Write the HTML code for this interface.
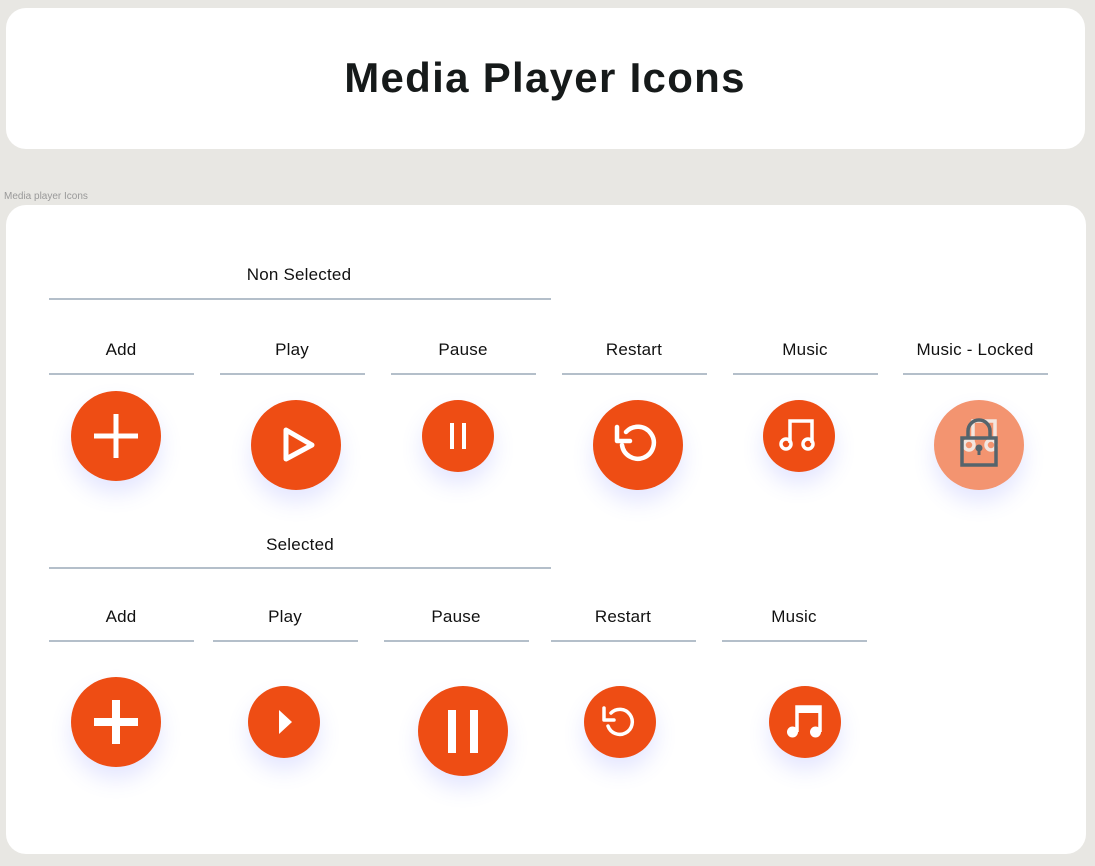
<!DOCTYPE html>
<html><head><style>
body{margin:0;width:1095px;height:866px;background:#e8e7e3;font-family:"Liberation Sans",sans-serif;position:relative;overflow:hidden}
.card{position:absolute;background:#fff;border-radius:20px}
.t{position:absolute;font-size:17px;color:#111;text-align:center;transform:translateX(-50%);white-space:nowrap;letter-spacing:0.2px}
.ln{position:absolute;height:2px;background:#b4bfca}
.c{position:absolute;border-radius:50%;background:#ee4d14;box-shadow:0 12px 22px rgba(90,100,255,0.16)}
.c svg{position:absolute;left:0;top:0;width:100%;height:100%}
</style></head><body>
<div class="card" style="left:6px;top:8px;width:1079px;height:141px"></div>
<div style="position:absolute;left:0;width:1090px;top:54px;text-align:center;font-size:42px;letter-spacing:1.3px;font-weight:bold;color:#161a1a">Media Player Icons</div>
<div style="position:absolute;left:4px;top:191px;font-size:10px;color:#999">Media player Icons</div>
<div class="card" style="left:6px;top:205px;width:1080px;height:649px"></div>

<div class="t" style="left:299px;top:265px">Non Selected</div>
<div class="ln" style="left:49px;top:298px;width:502px"></div>
<div class="t" style="left:121px;top:340px">Add</div><div class="ln" style="left:49px;top:373px;width:145px"></div>
<div class="t" style="left:292px;top:340px">Play</div><div class="ln" style="left:220px;top:373px;width:145px"></div>
<div class="t" style="left:463px;top:340px">Pause</div><div class="ln" style="left:391px;top:373px;width:145px"></div>
<div class="t" style="left:634px;top:340px">Restart</div><div class="ln" style="left:562px;top:373px;width:145px"></div>
<div class="t" style="left:805px;top:340px">Music</div><div class="ln" style="left:733px;top:373px;width:145px"></div>
<div class="t" style="left:975px;top:340px">Music - Locked</div><div class="ln" style="left:903px;top:373px;width:145px"></div>

<div class="c" style="left:71px;top:391px;width:90px;height:90px"><svg viewBox="0 0 90 90"><path d="M45 23V67M23 45H67" stroke="#fff" stroke-width="5"/></svg></div>
<div class="c" style="left:251px;top:400px;width:90px;height:90px"><svg viewBox="0 0 90 90"><path d="M35 30V59L61 45Z" fill="none" stroke="#fff" stroke-width="5" stroke-linejoin="round"/></svg></div>
<div class="c" style="left:422px;top:400px;width:72px;height:72px"><svg viewBox="0 0 72 72"><path d="M30 23V49M42 23V49" stroke="#fff" stroke-width="4"/></svg></div>
<div class="c" style="left:593px;top:400px;width:90px;height:90px"><svg viewBox="0 0 90 90"><path d="M29 45A16 16 0 1 0 33 32" fill="none" stroke="#fff" stroke-width="4.5" stroke-linecap="round"/><path d="M24 27V41H37" fill="none" stroke="#fff" stroke-width="4.5" stroke-linecap="round" stroke-linejoin="round"/></svg></div>
<div class="c" style="left:763px;top:400px;width:72px;height:72px"><svg viewBox="0 0 72 72"><path d="M27 43V21H49V43" fill="none" stroke="#fff" stroke-width="3.5"/><circle cx="23" cy="44" r="5" fill="none" stroke="#fff" stroke-width="3.5"/><circle cx="45" cy="44" r="5" fill="none" stroke="#fff" stroke-width="3.5"/></svg></div>
<div class="c" style="left:934px;top:400px;width:90px;height:90px;background:#f39470"><svg viewBox="0 0 90 90"><path d="M39 43V21H61V43" fill="none" stroke="#f2e6e0" stroke-width="3.5"/><circle cx="35" cy="45" r="5" fill="none" stroke="#f2e6e0" stroke-width="3.5"/><circle cx="57" cy="45" r="5" fill="none" stroke="#f2e6e0" stroke-width="3.5"/><path d="M34 38V31A11 11 0 0 1 56 31V38" fill="none" stroke="#55646c" stroke-width="3.5"/><rect x="28" y="38" width="34" height="27" fill="none" stroke="#55646c" stroke-width="3.5"/><circle cx="45" cy="48" r="3.5" fill="#55646c"/><path d="M45 48V55" stroke="#55646c" stroke-width="3"/></svg></div>

<div class="t" style="left:300px;top:535px">Selected</div>
<div class="ln" style="left:49px;top:567px;width:502px"></div>
<div class="t" style="left:121px;top:607px">Add</div><div class="ln" style="left:49px;top:640px;width:145px"></div>
<div class="t" style="left:285px;top:607px">Play</div><div class="ln" style="left:213px;top:640px;width:145px"></div>
<div class="t" style="left:456px;top:607px">Pause</div><div class="ln" style="left:384px;top:640px;width:145px"></div>
<div class="t" style="left:623px;top:607px">Restart</div><div class="ln" style="left:551px;top:640px;width:145px"></div>
<div class="t" style="left:794px;top:607px">Music</div><div class="ln" style="left:722px;top:640px;width:145px"></div>

<div class="c" style="left:71px;top:677px;width:90px;height:90px"><svg viewBox="0 0 90 90"><path d="M45 23V67M23 45H67" stroke="#fff" stroke-width="8"/></svg></div>
<div class="c" style="left:248px;top:686px;width:72px;height:72px"><svg viewBox="0 0 72 72"><path d="M31 24V48L44 36Z" fill="#fff"/></svg></div>
<div class="c" style="left:418px;top:686px;width:90px;height:90px"><svg viewBox="0 0 90 90"><path d="M34 24V67M56 24V67" stroke="#fff" stroke-width="8"/></svg></div>
<div class="c" style="left:584px;top:686px;width:72px;height:72px"><svg viewBox="0 0 72 72"><path d="M24 40A12.5 12.5 0 1 0 27 27" fill="none" stroke="#fff" stroke-width="3.5" stroke-linecap="round"/><path d="M20 22V34H30" fill="none" stroke="#fff" stroke-width="3.5" stroke-linecap="round" stroke-linejoin="round"/></svg></div>
<div class="c" style="left:769px;top:686px;width:72px;height:72px"><svg viewBox="0 0 72 72"><path d="M28 46V21H51V46" fill="none" stroke="#fff" stroke-width="3.5"/><path d="M28 21H51V27H28Z" fill="#fff"/><circle cx="23.5" cy="46" r="5.5" fill="#fff"/><circle cx="46.5" cy="46" r="5.5" fill="#fff"/></svg></div>
</body></html>
